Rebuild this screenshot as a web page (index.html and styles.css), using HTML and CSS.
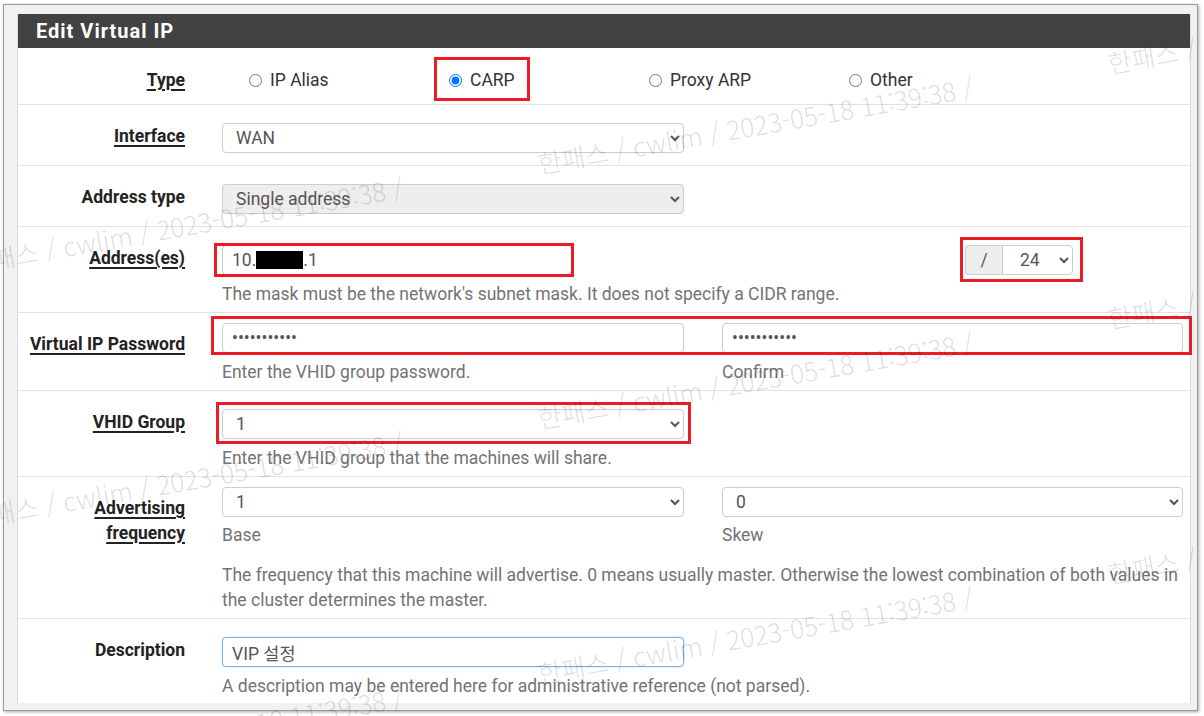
FILE: index.html
```html
<!DOCTYPE html>
<html lang="ko">
<head>
    <meta charset="UTF-8">
    <title>Edit Virtual IP</title>
    <link rel="stylesheet" href="styles.css">
</head>
<body>
    <div class="window">
        <section class="panel">
            <h2 class="panel-heading">Edit Virtual IP</h2>

            <div class="form-row type-row">
                <div class="form-label"><span class="link">Type</span></div>
                <div class="form-field radios">
                    <label class="radio-opt"><input type="radio" name="mode"> IP Alias</label>
                    <label class="radio-opt"><span class="radio-inner mark mark-carp"><input type="radio" name="mode" checked> CARP</span></label>
                    <label class="radio-opt"><input type="radio" name="mode"> Proxy ARP</label>
                    <label class="radio-opt"><input type="radio" name="mode"> Other</label>
                </div>
            </div>

            <div class="form-row no-help">
                <div class="form-label"><span class="link">Interface</span></div>
                <div class="form-field">
                    <select class="form-control half">
                        <option>WAN</option>
                    </select>
                </div>
            </div>

            <div class="form-row no-help">
                <div class="form-label">Address type</div>
                <div class="form-field">
                    <select class="form-control half" disabled>
                        <option>Single address</option>
                    </select>
                </div>
            </div>

            <div class="form-row">
                <div class="form-label"><span class="link">Address(es)</span></div>
                <div class="form-field">
                    <div class="addr-line">
                        <div class="form-control addr-input mark mark-addr">10.<span class="redact"></span>.1</div>
                        <div class="mask-group mark mark-mask">
                            <span class="addon">/</span>
                            <select class="form-control mask-select">
                                <option>24</option>
                            </select>
                        </div>
                    </div>
                    <p class="help">The mask must be the network's subnet mask. It does not specify a CIDR range.</p>
                </div>
            </div>

            <div class="form-row compact">
                <div class="form-label"><span class="link">Virtual IP Password</span></div>
                <div class="form-field">
                    <div class="cols mark mark-pass">
                        <div class="col">
                            <input type="password" class="form-control" value="vhidpass123">
                            <p class="help">Enter the VHID group password.</p>
                        </div>
                        <div class="col">
                            <input type="password" class="form-control" value="vhidpass123">
                            <p class="help">Confirm</p>
                        </div>
                    </div>
                </div>
            </div>

            <div class="form-row">
                <div class="form-label"><span class="link">VHID Group</span></div>
                <div class="form-field">
                    <div class="half mark mark-vhid">
                        <select class="form-control">
                            <option>1</option>
                        </select>
                    </div>
                    <p class="help">Enter the VHID group that the machines will share.</p>
                </div>
            </div>

            <div class="form-row compact">
                <div class="form-label"><span class="link">Advertising<br>frequency</span></div>
                <div class="form-field">
                    <div class="cols">
                        <div class="col">
                            <select class="form-control"><option>1</option></select>
                            <p class="help sub">Base</p>
                        </div>
                        <div class="col">
                            <select class="form-control"><option>0</option></select>
                            <p class="help sub">Skew</p>
                        </div>
                    </div>
                    <p class="help long">The frequency that this machine will advertise. 0 means usually master. Otherwise the lowest combination of both values in the cluster determines the master.</p>
                </div>
            </div>

            <div class="form-row last">
                <div class="form-label">Description</div>
                <div class="form-field">
                    <input type="text" class="form-control half focused" value="VIP 설정">
                    <p class="help">A description may be entered here for administrative reference (not parsed).</p>
                </div>
            </div>
        </section>
    </div>

    <div class="watermarks">
        <span class="wm c1 r1">한패스 / cwlim / 2023-05-18 11:39:38 /</span>
        <span class="wm c2 r1">한패스 / cwlim / 2023-05-18 11:39:38 /</span>
        <span class="wm c3 r1">한패스 / cwlim / 2023-05-18 11:39:38 /</span>
        <span class="wm c1 r2">한패스 / cwlim / 2023-05-18 11:39:38 /</span>
        <span class="wm c2 r2">한패스 / cwlim / 2023-05-18 11:39:38 /</span>
        <span class="wm c3 r2">한패스 / cwlim / 2023-05-18 11:39:38 /</span>
        <span class="wm c1 r3">한패스 / cwlim / 2023-05-18 11:39:38 /</span>
        <span class="wm c2 r3">한패스 / cwlim / 2023-05-18 11:39:38 /</span>
        <span class="wm c3 r3">한패스 / cwlim / 2023-05-18 11:39:38 /</span>
    </div>
</body>
</html>
```

FILE: styles.css
```css
* {
    margin: 0;
    padding: 0;
    box-sizing: border-box;
}

body {
    background: #ffffff;
    font-family: Roboto, "Noto Sans CJK KR", sans-serif;
    font-size: 17.5px;
    line-height: 25px;
    color: #333;
    position: relative;
    width: 1204px;
    height: 716px;
    overflow: hidden;
}

/* captured window frame */
.window {
    position: absolute;
    left: 3px;
    top: 4px;
    width: 1195px;
    height: 707px;
    border: 1px solid #9a9a9a;
    background: #f1f1f1;
    box-shadow: 1px 1px 3px rgba(0,0,0,0.35);
    padding: 9px 6px 6px 13px;
}

.panel {
    background: #fff;
    border-left: 1px solid #dcdcdc;
    border-right: 1px solid #dcdcdc;
    height: 689px;
}

.panel-heading {
    background: #424242;
    color: #fff;
    height: 34px;
    line-height: 35px;
    padding-left: 18px;
    font-size: 20px;
    font-weight: 700;
    letter-spacing: 1px;
}

.form-row {
    display: flex;
    border-bottom: 1px solid #e2e2e2;
    padding-bottom: 5px;
}

.form-row.no-help {
    padding-bottom: 12px;
}

.form-row.type-row {
    padding-bottom: 11px;
}

.form-row.last {
    border-bottom: none;
}

.form-label {
    width: 167px;
    flex: none;
    text-align: right;
    padding-top: 19px;
    font-weight: 700;
    color: #222;
}

.type-row .form-label {
    padding-top: 20px;
}

.link {
    text-decoration: underline;
    text-decoration-thickness: 2px;
    text-underline-offset: 3px;
}

.form-field {
    margin-left: 37px;
    width: 961px;
    padding-top: 18px;
}

.compact .form-field {
    padding-top: 10px;
}

.radios {
    display: flex;
    padding-left: 27px;
    padding-top: 20px;
}

.radio-opt {
    width: 200px;
    flex: none;
    display: flex;
    align-items: center;
    height: 25px;
    color: #333;
}

.radio-inner {
    display: flex;
    align-items: center;
    height: 25px;
}

.radio-opt input {
    margin: 0 8px 0 0;
    width: 13px;
    height: 13px;
}

.form-control {
    display: block;
    height: 30px;
    border: 1px solid #cccccc;
    border-radius: 4px;
    background: #fff;
    color: #555;
    font-family: Roboto, "Noto Sans CJK KR", sans-serif;
    font-size: 17.5px;
    padding: 0 9px;
    width: 100%;
}

.half {
    width: 462px;
}

select.form-control:disabled {
    background: #eeeeee;
    color: #555;
    opacity: 1;
}

.focused {
    border-color: #7cb0e4;
    box-shadow: 0 0 2px rgba(102,175,233,0.5);
}

.help {
    margin-top: 7px;
    color: #737373;
}

.help.sub {
    margin-top: 6px;
}

.help.long {
    margin-top: 15px;
}

.cols {
    display: flex;
    gap: 38px;
}

.col {
    width: 462px;
}

.col + .col {
    width: 461px;
}

.addr-line {
    display: flex;
    align-items: center;
}

.addr-input {
    width: 350px;
    line-height: 28px;
}

.redact {
    display: inline-block;
    width: 47px;
    height: 18px;
    background: #000;
    vertical-align: -3px;
}

.mask-group {
    display: flex;
    margin-left: auto;
    margin-right: 110px;
}

.addon {
    width: 37px;
    height: 30px;
    line-height: 28px;
    text-align: center;
    background: #eeeeee;
    border: 1px solid #cccccc;
    border-right: none;
    border-radius: 4px 0 0 4px;
    color: #555;
}

.mask-select {
    width: 71px;
    border-radius: 0 4px 4px 0;
    padding: 0 13px;
}

/* red annotation boxes drawn over the form */
.mark {
    position: relative;
}

.mark::after {
    content: '';
    position: absolute;
    border: 3px solid #ec1c24;
    pointer-events: none;
}

.mark-carp::after {
    left: -15px;
    right: -15px;
    top: -11px;
    bottom: -8px;
}

.mark-addr::after {
    left: -9px;
    right: -3px;
    top: -3px;
    bottom: -3px;
}

.mark-mask::after {
    left: -5px;
    right: -10px;
    top: -8px;
    bottom: -7px;
}

.mark-pass::after {
    left: -11px;
    right: -9px;
    top: -7px;
    bottom: 30px;
}

.mark-vhid::after {
    left: -6px;
    right: -7px;
    top: -7px;
    bottom: -5px;
}

/* screenshot watermark */
.watermarks {
    position: absolute;
    inset: 0;
    overflow: hidden;
    pointer-events: none;
}

.wm {
    position: absolute;
    left: var(--x);
    top: calc(var(--y) + var(--r));
    font-family: "Noto Sans CJK KR", sans-serif;
    font-weight: 300;
    font-size: 26px;
    line-height: 26px;
    color: rgba(0,0,0,0.15);
    white-space: nowrap;
    transform: rotate(-10deg);
    transform-origin: 0 100%;
}

.c1 { --x: -30px; --y: 250px; }
.c2 { --x: 540px; --y: 150px; }
.c3 { --x: 1110px; --y: 50px; }

.r1 { --r: 0px; }
.r2 { --r: 255px; }
.r3 { --r: 510px; }
```
